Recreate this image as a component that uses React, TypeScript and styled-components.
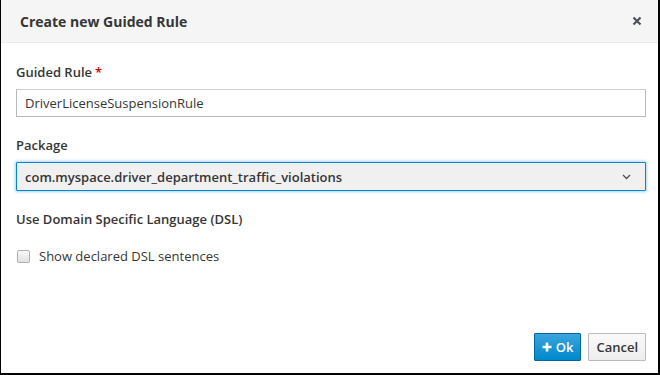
import React from "react";
import styled, { createGlobalStyle } from "styled-components";

const GlobalStyle = createGlobalStyle`
  html, body {
    margin: 0;
    padding: 0;
    background: #000;
  }
  body {
    font-family: "Open Sans", "Liberation Sans", sans-serif;
    color: #363636;
  }
`;

const Modal = styled.div`
  display: flex;
  flex-flow: column nowrap;
  width: 657px;
  height: 373px;
  margin-left: 1px;
  background: #fff;
`;

const Header = styled.div`
  display: flex;
  align-items: center;
  justify-content: space-between;
  height: 43px;
  box-sizing: border-box;
  padding: 0 16px 0 19px;
  background: #f5f5f5;
  border-bottom: 1px solid #ededed;
`;

const Title = styled.h4`
  margin: 0;
  font-size: 14px;
  font-weight: 700;
  color: #363636;
`;

const Close = styled.button`
  border: none;
  background: none;
  padding: 0;
  display: flex;
  color: #4d5258;
  cursor: pointer;
`;

const Body = styled.div`
  flex: 1;
  display: flex;
  flex-flow: column nowrap;
  padding: 19px 12px 0 15px;
`;

const Field = styled.div<{ $gap?: number }>`
  display: flex;
  flex-flow: column nowrap;
  margin-bottom: ${(p) => p.$gap ?? 16}px;
`;

const Label = styled.label`
  font-size: 13px;
  font-weight: 600;
  color: #363636;
  line-height: 20px;
  margin-bottom: 7px;
`;

const Required = styled.span`
  color: #c00;
  margin-left: 3px;
`;

const TextInput = styled.input`
  box-sizing: border-box;
  height: 28px;
  width: 100%;
  padding: 0 8px;
  font-family: inherit;
  font-size: 13px;
  color: #363636;
  border: 1px solid #bababa;
  border-top-color: #cecece;
  outline: none;
`;

const Select = styled.div`
  box-sizing: border-box;
  height: 29px;
  display: flex;
  align-items: center;
  justify-content: space-between;
  padding: 0 14px 0 8px;
  font-size: 13px;
  font-weight: 600;
  color: #363636;
  background: #f0f0f0;
  border: 1px solid #0088ce;
  border-radius: 1px;
  box-shadow: 0 0 3px 1px rgba(0, 136, 206, 0.35);
`;

const Heading = styled.div`
  font-size: 13px;
  font-weight: 600;
  line-height: 20px;
  margin: 0 0 18px;
`;

const CheckRow = styled.label`
  display: flex;
  align-items: center;
  gap: 9px;
  font-size: 13px;
  color: #363636;
  padding-left: 1px;
`;

const Box = styled.span`
  width: 11px;
  height: 11px;
  border: 1px solid #b0b0b0;
  border-radius: 2px;
  background: linear-gradient(#f8f8f8, #e2e2e2);
`;

const Footer = styled.div`
  display: flex;
  justify-content: flex-end;
  gap: 7px;
  padding: 0 12px 12px 0;
`;

const Button = styled.button<{ $primary?: boolean }>`
  height: 28px;
  box-sizing: border-box;
  display: flex;
  align-items: center;
  gap: 4px;
  padding: 0 7px;
  font-family: inherit;
  font-size: 13px;
  font-weight: 600;
  border-radius: 1px;
  cursor: pointer;
  color: ${(p) => (p.$primary ? "#fff" : "#363636")};
  background: ${(p) =>
    p.$primary
      ? "linear-gradient(#39a5dc, #0088ce)"
      : "linear-gradient(#fafafa, #ededed)"};
  border: 1px solid ${(p) => (p.$primary ? "#00659c" : "#bbb")};
`;

export default function App() {
  return (
    <>
      <GlobalStyle />
      <Modal>
        <Header>
          <Title>Create new Guided Rule</Title>
          <Close aria-label="Close">
            <svg width="10" height="10" viewBox="0 0 10 10">
              <path
                d="M1.5 1.5 L8.5 8.5 M8.5 1.5 L1.5 8.5"
                stroke="currentColor"
                strokeWidth="2.2"
              />
            </svg>
          </Close>
        </Header>
        <Body>
          <Field $gap={18}>
            <Label>
              Guided Rule<Required>*</Required>
            </Label>
            <TextInput defaultValue="DriverLicenseSuspensionRule" />
          </Field>
          <Field $gap={18}>
            <Label>Package</Label>
            <Select>
              <span>com.myspace.driver_department_traffic_violations</span>
              <svg width="9" height="6" viewBox="0 0 9 6">
                <path
                  d="M1 1 L4.5 4.5 L8 1"
                  fill="none"
                  stroke="#4d5258"
                  strokeWidth="1.3"
                />
              </svg>
            </Select>
          </Field>
          <Heading>Use Domain Specific Language (DSL)</Heading>
          <CheckRow>
            <Box />
            Show declared DSL sentences
          </CheckRow>
        </Body>
        <Footer>
          <Button $primary>
            <svg width="10" height="10" viewBox="0 0 10 10">
              <path d="M5 0.5 V9.5 M0.5 5 H9.5" stroke="#fff" strokeWidth="2.6" />
            </svg>
            Ok
          </Button>
          <Button>Cancel</Button>
        </Footer>
      </Modal>
    </>
  );
}
